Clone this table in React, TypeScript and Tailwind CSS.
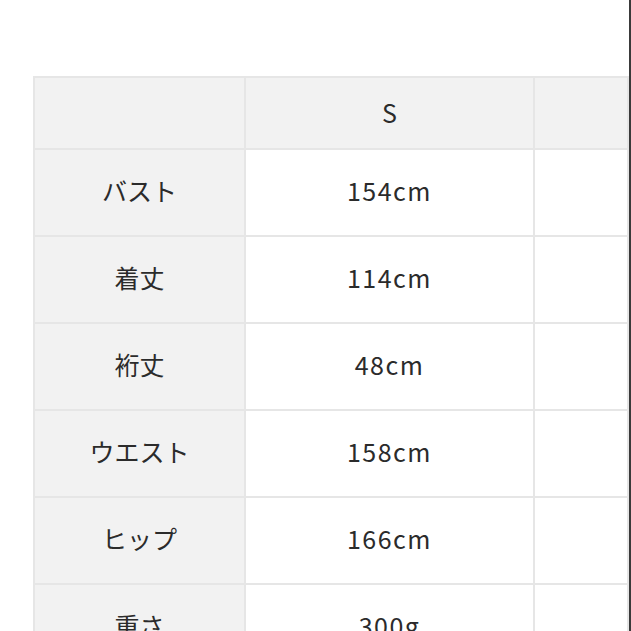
import React from "react";

const rows: [string, string][] = [
  ["バスト", "154cm"],
  ["着丈", "114cm"],
  ["裄丈", "48cm"],
  ["ウエスト", "158cm"],
  ["ヒップ", "166cm"],
  ["重さ", "300g"],
];

const font = {
  fontFamily: '"Noto Sans CJK JP", "Noto Sans", sans-serif',
};

export default function App() {
  return (
    <div
      className="w-[631px] h-[631px] overflow-hidden bg-white text-[#2b2b2b] text-[25px] leading-none border-r-2 border-[#3a3a3a] pl-[33px] pt-[76px]"
      style={font}
    >
      <div className="grid grid-cols-[209px_287px_92px] gap-[2px] p-[2px] bg-[#e6e6e6] w-[596px]">
        <div className="h-[70px] bg-[#f2f2f2]" />
        <div className="h-[70px] bg-[#f2f2f2] flex items-center justify-center pb-[2px]">S</div>
        <div className="h-[70px] bg-[#f2f2f2]" />
        {rows.map(([label, value]) => (
          <React.Fragment key={label}>
            <div className="h-[85px] bg-[#f2f2f2] flex items-center justify-center pb-[5px]">{label}</div>
            <div className="h-[85px] bg-white flex items-center justify-center pb-[5px] tracking-[1.5px]">{value}</div>
            <div className="h-[85px] bg-white" />
          </React.Fragment>
        ))}
      </div>
    </div>
  );
}
